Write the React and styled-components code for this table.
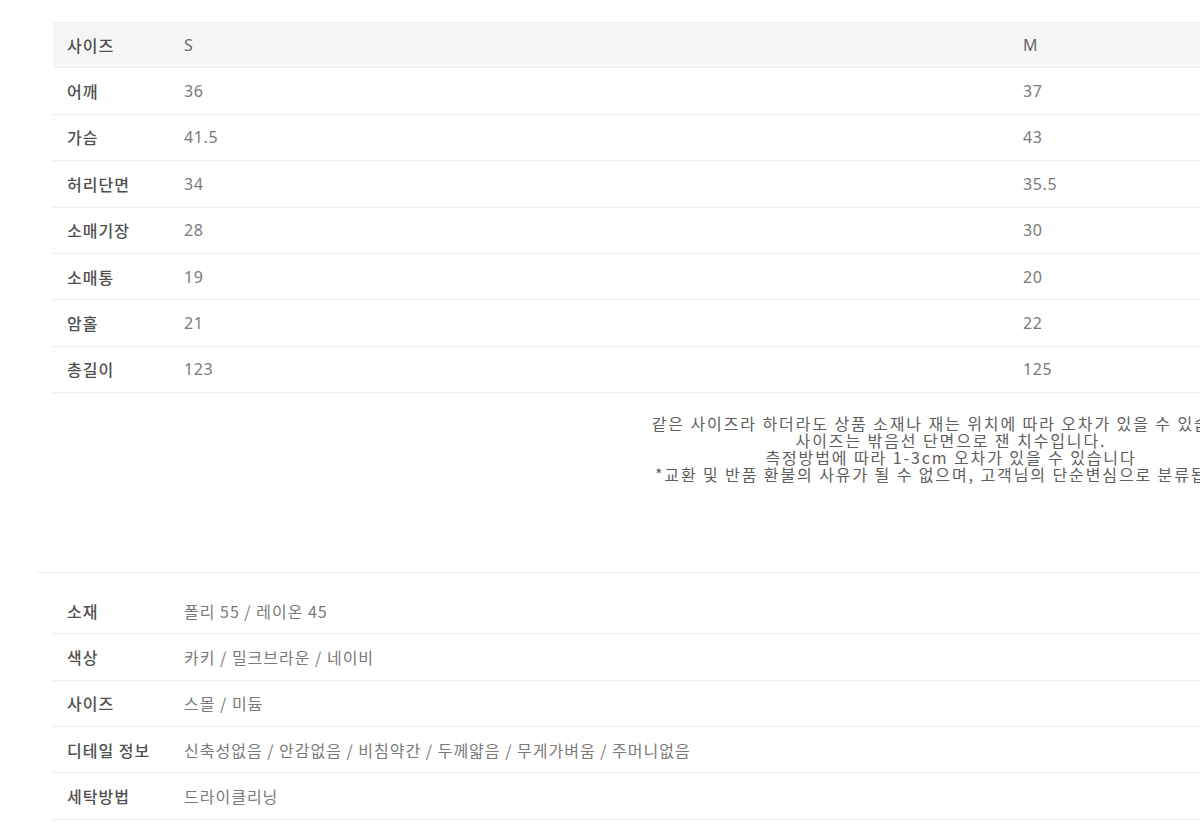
import React from "react";
import styled, { createGlobalStyle } from "styled-components";

const Global = createGlobalStyle`
  html, body { margin: 0; padding: 0; background: #fff; overflow: hidden; }
  body { font-family: "Noto Sans CJK KR", "Noto Sans", sans-serif; }
`;

const Page = styled.div`
  width: 1850px;
  padding-top: 22px;
`;

const SizeTable = styled.div`
  margin-left: 53px;
  width: 1796px;
  display: flex;
  flex-direction: column;
`;

const SizeRow = styled.div`
  display: grid;
  grid-template-columns: 131px 839px 1fr;
  align-items: center;
  height: 46.4px;
  box-sizing: border-box;
  border-bottom: 1px solid #ececec;
  background: ${(p) => (p.$head ? "#f6f6f6" : "#fff")};
  border-top: ${(p) => (p.$head ? "1px solid #eeeeee" : "none")};
`;

const Label = styled.div`
  padding-left: 14px;
  font-size: 16px;
  font-weight: 500;
  color: #505050;
  letter-spacing: 1px;
`;

const Value = styled.div`
  font-family: "Noto Sans", "Noto Sans CJK KR", sans-serif;
  font-size: 16px;
  color: ${(p) => (p.$head ? "#666" : "#7a7a7a")};
  letter-spacing: 0.6px;
`;

const Notes = styled.div`
  margin: 22px 0 0 53px;
  width: 1796px;
  text-align: center;
  font-size: 16px;
  line-height: 17px;
  color: #5e5e5e;
  letter-spacing: 1.9px;
  white-space: nowrap;
`;

const Divider = styled.div`
  margin: 89px 0 0 37px;
  height: 1px;
  background: #eeeeee;
`;

const InfoTable = styled.div`
  margin: 15px 0 0 53px;
  width: 1796px;
  display: flex;
  flex-direction: column;
`;

const InfoRow = styled.div`
  display: grid;
  grid-template-columns: 131px 1fr;
  align-items: center;
  height: 46.3px;
  box-sizing: border-box;
  border-bottom: 1px solid #ececec;
`;

const InfoValue = styled.div`
  font-size: 16px;
  color: #7a7a7a;
  letter-spacing: 1px;
`;

const sizes = [
  ["어깨", "36", "37"],
  ["가슴", "41.5", "43"],
  ["허리단면", "34", "35.5"],
  ["소매기장", "28", "30"],
  ["소매통", "19", "20"],
  ["암홀", "21", "22"],
  ["총길이", "123", "125"],
];

const info = [
  ["소재", "폴리 55 / 레이온 45"],
  ["색상", "카키 / 밀크브라운 / 네이비"],
  ["사이즈", "스몰 / 미듐"],
  ["디테일 정보", "신축성없음 / 안감없음 / 비침약간 / 두께얇음 / 무게가벼움 / 주머니없음"],
  ["세탁방법", "드라이클리닝"],
];

export default function App() {
  return (
    <Page>
      <Global />
      <SizeTable>
        <SizeRow $head>
          <Label>사이즈</Label>
          <Value $head>S</Value>
          <Value $head>M</Value>
        </SizeRow>
        {sizes.map(([l, s, m]) => (
          <SizeRow key={l}>
            <Label>{l}</Label>
            <Value>{s}</Value>
            <Value>{m}</Value>
          </SizeRow>
        ))}
      </SizeTable>
      <Notes>
        <div>같은 사이즈라 하더라도 상품 소재나 재는 위치에 따라 오차가 있을 수 있습니다.</div>
        <div>사이즈는 밖음선 단면으로 잰 치수입니다.</div>
        <div>측정방법에 따라 1-3cm 오차가 있을 수 있습니다</div>
        <div>*교환 및 반품 환불의 사유가 될 수 없으며, 고객님의 단순변심으로 분류됩니다.</div>
      </Notes>
      <Divider />
      <InfoTable>
        {info.map(([l, v]) => (
          <InfoRow key={l}>
            <Label>{l}</Label>
            <InfoValue>{v}</InfoValue>
          </InfoRow>
        ))}
      </InfoTable>
    </Page>
  );
}
